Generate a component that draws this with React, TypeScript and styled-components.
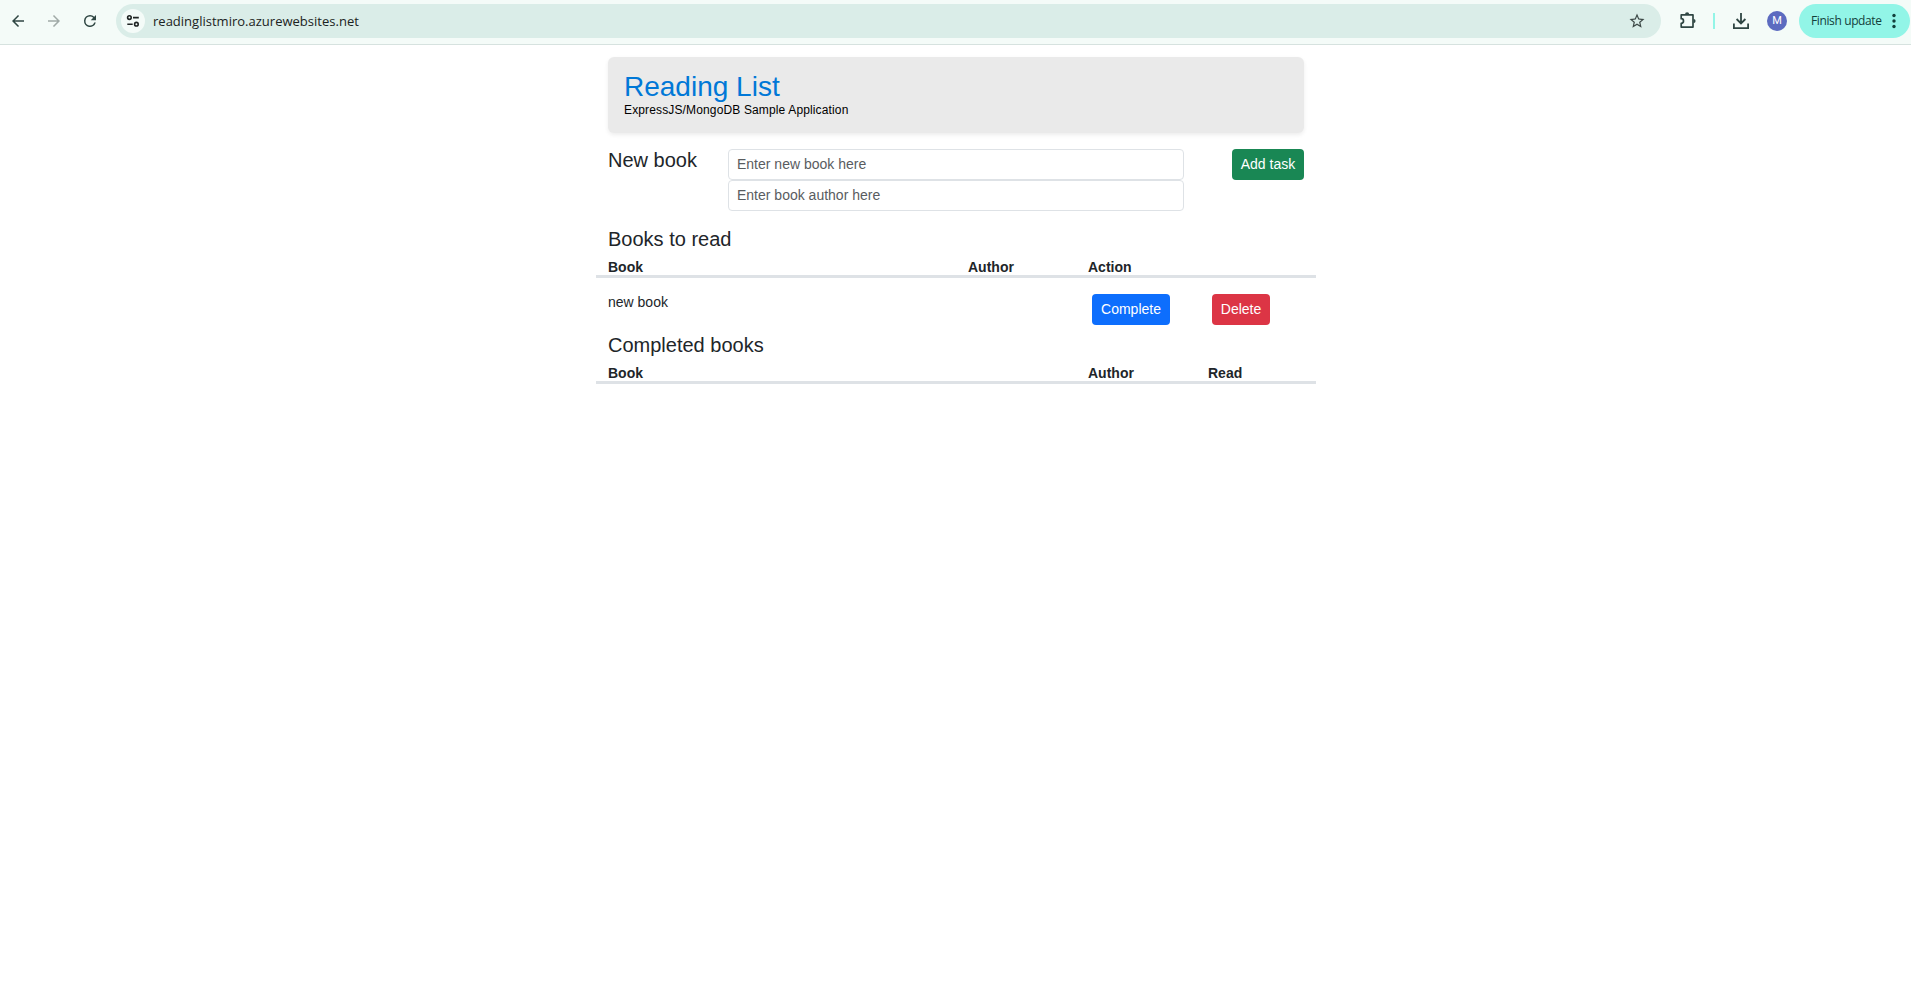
import React from "react";
import styled, { createGlobalStyle } from "styled-components";

const GlobalStyle = createGlobalStyle`
  * { box-sizing: border-box; }
  html, body { margin: 0; padding: 0; background: #fff; }
  body {
    font-family: "Liberation Sans", Arial, sans-serif;
    font-size: 14px;
    line-height: 16px;
    color: #212529;
  }
  svg { display: block; flex: none; }
`;

const Toolbar = styled.header`
  display: flex;
  align-items: center;
  height: 45px;
  padding: 0 1px 3px 9px;
  background: #f4fbf8;
  border-bottom: 1px solid #d6e2df;
  font-family: "Open Sans", "Noto Sans", sans-serif;
`;

const NavIcons = styled.nav`
  display: flex;
  gap: 18px;
  margin-right: 17px;
  color: #2f4643;
`;

const NavButton = styled.span<{ $dim?: boolean }>`
  display: flex;
  color: ${(p) => (p.$dim ? "#a0aaa7" : "inherit")};
`;

const AddressBar = styled.div`
  display: flex;
  align-items: center;
  flex: 1;
  height: 34px;
  padding: 0 15px 0 5px;
  border-radius: 17px;
  background: #daede8;
  color: #3c4846;
`;

const SiteInfo = styled.span`
  display: flex;
  align-items: center;
  justify-content: center;
  width: 24px;
  height: 24px;
  border-radius: 50%;
  background: #f4fbf8;
  color: #202524;
`;

const Url = styled.span`
  flex: 1;
  margin-left: 8px;
  font-size: 13px;
  line-height: 18px;
  letter-spacing: 0.01px;
  color: #1b2322;
`;

const Actions = styled.div`
  display: flex;
  align-items: center;
  margin-left: 18px;
  color: #2f4643;
`;

const Divider = styled.span`
  width: 2px;
  height: 16px;
  margin: 0 17px 0 16px;
  background: #92f5e7;
`;

const Avatar = styled.span`
  width: 20px;
  height: 20px;
  margin: 0 12px 0 17px;
  border-radius: 50%;
  background: #5c6bc0;
  color: #fff;
  font: 11px/20px Roboto, sans-serif;
  text-align: center;
`;

const UpdateButton = styled.button`
  display: flex;
  align-items: center;
  justify-content: space-between;
  width: 111px;
  height: 34px;
  padding: 0 14px 0 12px;
  border: 0;
  border-radius: 17px;
  background: #92f5e7;
  color: #12403b;
  font-family: inherit;
  font-size: 12px;
  letter-spacing: -0.38px;
  white-space: nowrap;
`;

const Container = styled.main`
  width: 720px;
  margin: 12px 0 0 calc(50% - 359.5px);
`;

const Banner = styled.section`
  height: 76px;
  margin: 0 12px 16px;
  padding: 13px 16px;
  border-radius: 6px;
  background: #eaeaea;
  box-shadow: 0 2px 4px rgba(0, 0, 0, 0.075);
`;

const Title = styled.h1`
  margin: 0;
  font-size: 28px;
  font-weight: 400;
  line-height: 33px;
  color: #0078d7;
`;

const Subtitle = styled.div`
  font-size: 12px;
  line-height: 14px;
  letter-spacing: 0.14px;
  color: #000;
`;

const Grid = styled.div<{ $columns: string; $ruled?: boolean }>`
  display: grid;
  grid-template-columns: ${(p) => p.$columns};
  border-bottom: ${(p) => (p.$ruled ? "3px solid #dee2e6" : "0")};
  font-weight: ${(p) => (p.$ruled ? 700 : 400)};
`;

const Cell = styled.div<{ $end?: boolean }>`
  padding: 0 12px;
  text-align: ${(p) => (p.$end ? "right" : "left")};
`;

const Heading = styled.h2`
  margin: 0;
  font-size: 20px;
  font-weight: 400;
  line-height: 22px;
`;

const SectionHeading = styled(Heading)`
  padding: 0 12px;
  margin-bottom: 9px;
`;

const Section = styled.section<{ $top: number }>`
  margin-top: ${(p) => p.$top}px;
`;

const Rows = styled.div`
  padding-top: 16px;
`;

const Input = styled.input`
  display: block;
  width: 100%;
  height: 31px;
  padding: 3px 8px 5px;
  border: 1px solid #dee2e6;
  border-radius: 4px;
  background: #fff;
  font: 14px/21px "Liberation Sans", Arial, sans-serif;
  color: #212529;
  &::placeholder { color: #595c5f; opacity: 1; }
`;

const Button = styled.button<{ $color: string; $width: number; $indent?: boolean }>`
  display: inline-block;
  vertical-align: top;
  width: ${(p) => p.$width}px;
  height: 31px;
  margin-left: ${(p) => (p.$indent ? 4 : 0)}px;
  padding: 0;
  border: 0;
  border-radius: 4px;
  background: ${(p) => p.$color};
  color: #fff;
  font: 14px/21px "Liberation Sans", Arial, sans-serif;
  white-space: nowrap;
`;

const Icon = ({ d, size = 18 }: { d: string; size?: number }) => (
  <svg width={size} height={size} viewBox="0 0 24 24" fill="currentColor">
    <path d={d} />
  </svg>
);

const TuneIcon = () => (
  <svg width="14" height="14" viewBox="0 0 14 14" fill="none" stroke="currentColor" strokeWidth="1.6">
    <circle cx="3.4" cy="3.6" r="1.8" />
    <path d="M7 3.6h5.8M1.3 10.2h5.4" />
    <circle cx="10.4" cy="10.2" r="1.8" />
  </svg>
);

const ExtensionIcon = () => (
  <svg width="18" height="18" viewBox="0 0 18 18" fill="none" stroke="currentColor" strokeWidth="1.7" strokeLinejoin="round">
    <path d="M2.2 2.9H14v12.2H2.2v-3.8a2.3 2.3 0 0 0 0-4.6z" fill="none" />
    <path d="M6 2.4a2.1 2.1 0 0 1 4.2 0zM14.5 7a2.1 2.1 0 0 1 0 4.2z" fill="currentColor" stroke="none" />
  </svg>
);

const DownloadIcon = () => (
  <svg width="18" height="18" viewBox="0 0 18 18" fill="none" stroke="currentColor" strokeWidth="1.8">
    <path d="M9 1v10M4.6 7l4.4 4.4L13.4 7M1.9 11.5v4.6h14.2v-4.6" />
  </svg>
);

const DotsIcon = () => (
  <svg width="4" height="16" viewBox="0 0 4 16" fill="currentColor">
    <circle cx="2" cy="2.5" r="1.7" />
    <circle cx="2" cy="8" r="1.7" />
    <circle cx="2" cy="13.5" r="1.7" />
  </svg>
);

export default function App() {
  return (
    <>
      <GlobalStyle />
      <Toolbar>
        <NavIcons>
          <NavButton><Icon d="M20 11H7.83l5.59-5.59L12 4l-8 8 8 8 1.41-1.41L7.83 13H20v-2z" /></NavButton>
          <NavButton $dim><Icon d="M12 4l-1.41 1.41L16.17 11H4v2h12.17l-5.58 5.59L12 20l8-8z" /></NavButton>
          <NavButton><Icon d="M17.65 6.35A7.96 7.96 0 0 0 12 4a8 8 0 1 0 7.73 10h-2.08A6 6 0 1 1 12 6c1.66 0 3.14.69 4.22 1.78L13 11h7V4l-2.35 2.35z" /></NavButton>
        </NavIcons>
        <AddressBar>
          <SiteInfo><TuneIcon /></SiteInfo>
          <Url>readinglistmiro.azurewebsites.net</Url>
          <Icon d="M22 9.24l-7.19-.62L12 2 9.19 8.63 2 9.24l5.46 4.73L5.82 21 12 17.27 18.18 21l-1.63-7.03L22 9.24zM12 15.4l-3.76 2.27 1-4.28-3.32-2.88 4.38-.38L12 6.1l1.71 4.04 4.38.38-3.32 2.88 1 4.28L12 15.4z" />
        </AddressBar>
        <Actions>
          <ExtensionIcon />
          <Divider />
          <DownloadIcon />
          <Avatar>M</Avatar>
          <UpdateButton>Finish update<DotsIcon /></UpdateButton>
        </Actions>
      </Toolbar>
      <Container>
        <Banner>
          <Title>Reading List</Title>
          <Subtitle>ExpressJS/MongoDB Sample Application</Subtitle>
        </Banner>
        <Grid $columns="2fr 8fr 2fr">
          <Cell><Heading>New book</Heading></Cell>
          <Cell>
            <Input placeholder="Enter new book here" />
            <Input placeholder="Enter book author here" />
          </Cell>
          <Cell $end><Button $color="#198754" $width={72}>Add task</Button></Cell>
        </Grid>
        <Section $top={17}>
          <SectionHeading>Books to read</SectionHeading>
          <Grid $columns="6fr 2fr 4fr" $ruled>
            <Cell>Book</Cell>
            <Cell>Author</Cell>
            <Cell>Action</Cell>
          </Grid>
          <Rows>
            <Grid $columns="6fr 2fr 2fr 2fr">
              <Cell>new book</Cell>
              <Cell />
              <Cell><Button $color="#0d6efd" $width={78} $indent>Complete</Button></Cell>
              <Cell><Button $color="#dc3545" $width={58} $indent>Delete</Button></Cell>
            </Grid>
          </Rows>
        </Section>
        <Section $top={9}>
          <SectionHeading>Completed books</SectionHeading>
          <Grid $columns="8fr 2fr 2fr" $ruled>
            <Cell>Book</Cell>
            <Cell>Author</Cell>
            <Cell>Read</Cell>
          </Grid>
        </Section>
      </Container>
    </>
  );
}
